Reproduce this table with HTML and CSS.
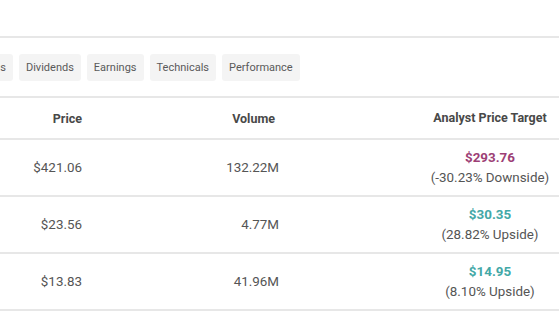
FILE: index.html
```html
<!DOCTYPE html>
<html>
<head>
<meta charset="utf-8">
<link rel="stylesheet" href="styles.css">
</head>
<body>
<div class="page">
  <div class="top"></div>
  <div class="tabs">
    <span class="tab first">Ratings</span>
    <span class="tab">Dividends</span>
    <span class="tab">Earnings</span>
    <span class="tab">Technicals</span>
    <span class="tab">Performance</span>
  </div>
  <div class="table">
    <div class="row head">
      <div class="c1">Price</div>
      <div class="c2 hv">Volume</div>
      <div class="c3">Analyst Price Target</div>
    </div>
    <div class="row">
      <div class="c1">$421.06</div>
      <div class="c2">132.22M</div>
      <div class="c3"><span class="down">$293.76</span><span>(-30.23% Downside)</span></div>
    </div>
    <div class="row">
      <div class="c1">$23.56</div>
      <div class="c2">4.77M</div>
      <div class="c3"><span class="up">$30.35</span><span>(28.82% Upside)</span></div>
    </div>
    <div class="row">
      <div class="c1">$13.83</div>
      <div class="c2">41.96M</div>
      <div class="c3"><span class="up">$14.95</span><span>(8.10% Upside)</span></div>
    </div>
  </div>
</div>
</body>
</html>
```
FILE: styles.css
```css
html, body {
  margin: 0;
  padding: 0;
  background: #fff;
  overflow: hidden;
}
.page {
  width: 559px;
  height: 314px;
  overflow: hidden;
  font-family: Roboto, "Liberation Sans", sans-serif;
  color: #555;
}
.top {
  height: 36px;
  border-bottom: 2px solid #e7e7e7;
}
.tabs {
  display: flex;
  gap: 6px;
  padding: 16px 0 15px 0;
  height: 27px;
  border-bottom: 2px solid #e7e7e7;
}
.tab {
  display: flex;
  align-items: center;
  height: 27px;
  padding: 0 7px;
  background: #f4f4f4;
  border-radius: 3px;
  font-size: 11px;
  color: #5a5a5a;
  white-space: nowrap;
}
.tab.first {
  margin-left: -38px;
}
.table {
  width: 693px;
}
.row {
  display: grid;
  grid-template-columns: 90px 197px 406px;
  height: 55px;
  align-items: center;
  border-bottom: 2px solid #e7e7e7;
  font-size: 13.4px;
}
.row.head {
  height: 40px;
  font-size: 12.5px;
  font-weight: 700;
  color: #484848;
}
.c1 {
  text-align: right;
  padding-right: 8px;
}
.c2 {
  text-align: right;
  padding-right: 8px;
}
.c2.hv {
  padding-right: 12px;
}
.c3 {
  display: flex;
  flex-direction: column;
  align-items: center;
  line-height: 20px;
}
.up, .down {
  font-weight: 700;
}
.up {
  color: #43a8a7;
}
.down {
  color: #9d3f76;
}
```
